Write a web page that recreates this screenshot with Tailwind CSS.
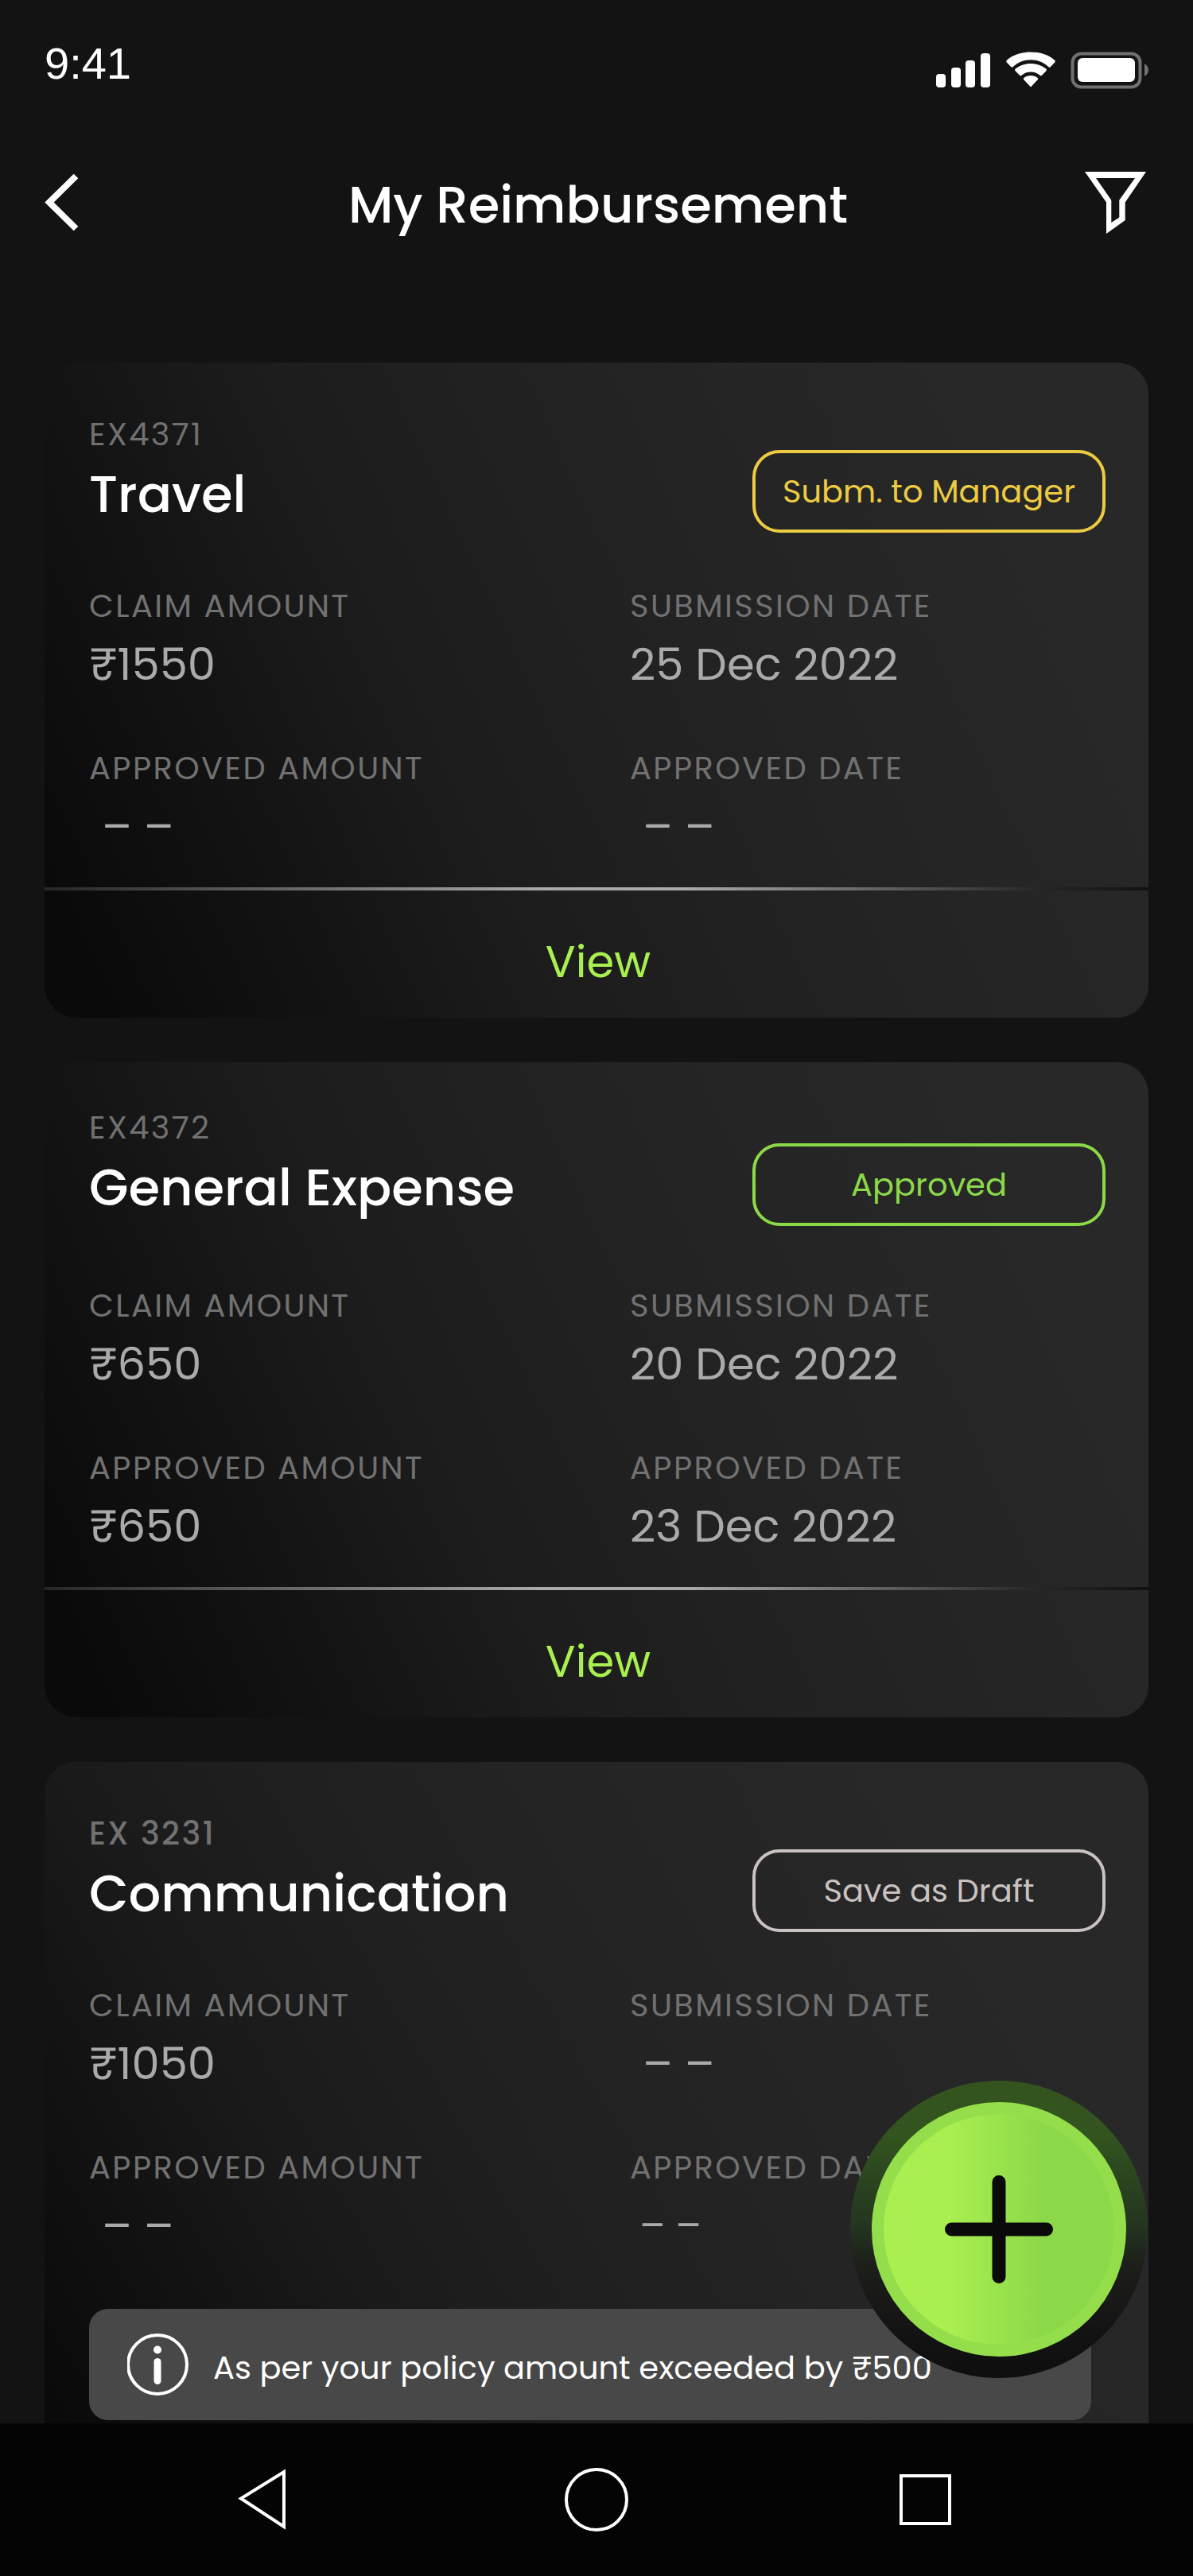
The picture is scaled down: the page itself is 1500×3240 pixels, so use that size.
<!DOCTYPE html>
<html lang="en">
<head>
<meta charset="utf-8">
<meta name="viewport" content="width=device-width, initial-scale=1">
<title>My Reimbursement</title>
<script src="https://cdn.jsdelivr.net/npm/@tailwindcss/browser@4"></script>
</head>
<body class="bg-[#131313] text-white font-['Poppins','Inter',sans-serif]">
<div class="relative flex h-screen flex-col overflow-hidden">

  <!-- Status bar -->
  <div class="flex h-40 shrink-0 items-center justify-between px-14">
    <time class="font-['Liberation_Sans',sans-serif] text-[56px] leading-none">9:41</time>
    <svg class="mt-4 h-12 w-[268px]" viewBox="0 0 268 48" fill="#fff" aria-hidden="true">
      <rect x="1" y="29" width="12" height="17" rx="4"/>
      <rect x="20" y="21" width="12" height="25" rx="4"/>
      <rect x="38" y="12" width="12" height="34" rx="4"/>
      <rect x="57" y="3" width="12" height="43" rx="4"/>
      <path d="M120 11.300c8.500 0 16.300 3.300 22.200 8.700q1.400 1.300 2.700-.1l5.300-5.500q1.300-1.400-.1-2.700C142 4.600 131.500 1.500 120 1.500S98 4.600 89.900 11.700q-1.400 1.300-.1 2.700l5.300 5.500q1.300 1.400 2.700.1c5.900-5.400 13.700-8.700 22.200-8.700z"/>
      <path d="M120 26.500c4.400 0 8.400 1.600 11.500 4.200q1.400 1.200 2.700-.1l5.200-5.400q1.200-1.300-.1-2.600C134.100 18.200 127.400 15.900 120 15.900s-14.100 2.300-19.300 6.700q-1.300 1.300-.1 2.600l5.200 5.400q1.300 1.300 2.700.1c3.100-2.600 7.100-4.200 11.500-4.200z"/>
      <path d="M120 45.500l-8.700-9.200q-1.200-1.400.3-2.500c2.400-1.700 5.300-2.700 8.400-2.700s6 1 8.400 2.700q1.500 1.100.3 2.500z"/>
      <rect x="172.500" y="3.500" width="85" height="42" rx="11" fill="none" stroke="#71716f" stroke-width="4"/>
      <rect x="179" y="9" width="72" height="30" rx="6"/>
      <path d="M263 16c3 1.500 5 4.500 5 8s-2 6.500-5 8z" fill="#71716f"/>
    </svg>
  </div>

  <!-- App bar -->
  <header class="grid h-48 shrink-0 grid-cols-[1fr_auto_1fr] items-center px-14">
    <button type="button" aria-label="Back" class="justify-self-start">
      <svg class="h-19 w-11" viewBox="0 0 44 76" fill="none" stroke="#fff" stroke-width="8"><path d="M39.500 3.500 6 36.500l33.500 33"/></svg>
    </button>
    <h1 class="pt-1 pl-1 text-[64px] leading-20 font-medium">My Reimbursement</h1>
    <button type="button" aria-label="Filter" class="justify-self-end">
      <svg class="h-20 w-20" viewBox="0 0 80 80" fill="#fff" fill-rule="evenodd"><path d="M0 0h77L50.700 38.500V61L27 78V38.500zM14 8l19.300 27.700V64l10-6.500V35.700L63 8z"/></svg>
    </button>
  </header>

  <main class="flex min-h-0 flex-1 flex-col gap-14 overflow-hidden px-14 pt-26">

    <article class="shrink-0 rounded-[40px] bg-[linear-gradient(65deg,#0a0a0a_5%,#131313_21%,#1c1c1c_36%,#212121_52%,#252525_70%,#282828_88%)]">
      <div class="flex items-start justify-between pt-[66px] pr-[54px] pl-14">
        <div>
          <p class="text-[40px] leading-12 tracking-[0.06em] text-[#717171]">EX4371</p>
          <h2 class="mt-2 text-[64px] leading-22 font-medium">Travel</h2>
        </div>
        <span class="mt-11 flex h-26 w-[444px] items-center justify-center rounded-[34px] border-4 border-[#eccb42] text-[40px] text-[#eccb42]">Subm. to Manager</span>
      </div>
      <dl class="mt-17 grid grid-cols-2 gap-x-[82px] gap-y-[70px] pr-[54px] pl-14">
        <div><dt class="text-[40px] leading-12 tracking-[0.06em] text-[#717171]">CLAIM AMOUNT</dt><dd class="mt-3.5 text-[56px] leading-18 text-[#aaa]">₹1550</dd></div>
        <div><dt class="text-[40px] leading-12 tracking-[0.06em] text-[#717171]">SUBMISSION DATE</dt><dd class="mt-3.5 text-[56px] leading-18 text-[#aaa]">25 Dec 2022</dd></div>
        <div><dt class="text-[40px] leading-12 tracking-[0.06em] text-[#717171]">APPROVED AMOUNT</dt><dd class="mt-3.5 pl-4 text-[56px] leading-18 text-[#aaa]">– –</dd></div>
        <div><dt class="text-[40px] leading-12 tracking-[0.06em] text-[#717171]">APPROVED DATE</dt><dd class="mt-3.5 pl-4 text-[56px] leading-18 text-[#aaa]">– –</dd></div>
      </dl>
      <div class="mt-10 h-1 bg-[linear-gradient(90deg,#262626,#aaa_45%,#aaa_58%,#262626_90%,#121212)]"></div>
      <a href="#ex4371" class="flex h-40 items-center justify-center pt-5 pl-1 text-[56px] text-[#a9ef4f]">View</a>
    </article>

    <article class="shrink-0 rounded-[40px] bg-[linear-gradient(65deg,#0a0a0a_5%,#131313_21%,#1c1c1c_36%,#212121_52%,#252525_70%,#282828_88%)]">
      <div class="flex items-start justify-between pt-[58px] pr-[54px] pl-14">
        <div>
          <p class="text-[40px] leading-12 tracking-[0.06em] text-[#717171]">EX4372</p>
          <h2 class="mt-2 text-[64px] leading-22 font-medium">General Expense</h2>
        </div>
        <span class="mt-11 flex h-26 w-[444px] items-center justify-center rounded-[34px] border-4 border-[#8bd848] text-[40px] text-[#8bd848]">Approved</span>
      </div>
      <dl class="mt-19 grid grid-cols-2 gap-x-[82px] gap-y-[70px] pr-[54px] pl-14">
        <div><dt class="text-[40px] leading-12 tracking-[0.06em] text-[#717171]">CLAIM AMOUNT</dt><dd class="mt-3.5 text-[56px] leading-18 text-[#aaa]">₹650</dd></div>
        <div><dt class="text-[40px] leading-12 tracking-[0.06em] text-[#717171]">SUBMISSION DATE</dt><dd class="mt-3.5 text-[56px] leading-18 text-[#aaa]">20 Dec 2022</dd></div>
        <div><dt class="text-[40px] leading-12 tracking-[0.06em] text-[#717171]">APPROVED AMOUNT</dt><dd class="mt-3.5 text-[56px] leading-18 text-[#aaa]">₹650</dd></div>
        <div><dt class="text-[40px] leading-12 tracking-[0.06em] text-[#717171]">APPROVED DATE</dt><dd class="mt-3.5 text-[56px] leading-18 text-[#aaa]">23 Dec 2022</dd></div>
      </dl>
      <div class="mt-10 h-1 bg-[linear-gradient(90deg,#262626,#aaa_45%,#aaa_58%,#262626_90%,#121212)]"></div>
      <a href="#ex4372" class="flex h-40 items-center justify-center pt-5 pl-1 text-[56px] text-[#a9ef4f]">View</a>
    </article>

    <article class="shrink-0 rounded-[40px] bg-[linear-gradient(60deg,#0a0a0a_6%,#131313_20%,#1a1a1a_30%,#202020_45%,#242424_62%,#282828_85%)] pb-40">
      <div class="flex items-start justify-between pt-[66px] pr-[54px] pl-14">
        <div>
          <p class="text-[40px] leading-12 font-medium tracking-[0.06em] text-[#717171]">EX 3231</p>
          <h2 class="mt-2 text-[64px] leading-22 font-medium">Communication</h2>
        </div>
        <span class="mt-11 flex h-26 w-[444px] items-center justify-center rounded-[34px] border-4 border-[#c9c2c1] text-[40px] text-[#c9c2c1]">Save as Draft</span>
      </div>
      <dl class="mt-17 grid grid-cols-2 gap-x-[82px] gap-y-[70px] pr-[54px] pl-14">
        <div><dt class="text-[40px] leading-12 tracking-[0.06em] text-[#717171]">CLAIM AMOUNT</dt><dd class="mt-3.5 text-[56px] leading-18 text-[#aaa]">₹1050</dd></div>
        <div><dt class="text-[40px] leading-12 tracking-[0.06em] text-[#717171]">SUBMISSION DATE</dt><dd class="mt-3.5 pl-4 text-[56px] leading-18 text-[#aaa]">– –</dd></div>
        <div><dt class="text-[40px] leading-12 tracking-[0.06em] text-[#717171]">APPROVED AMOUNT</dt><dd class="mt-3.5 pl-4 text-[56px] leading-18 text-[#aaa]">– –</dd></div>
        <div><dt class="text-[40px] leading-12 tracking-[0.06em] text-[#717171]">APPROVED DATE</dt><dd class="mt-3.5 pl-3 text-[48px] leading-18 text-[#aaa]">– –</dd></div>
      </dl>
      <div class="mt-17 mr-18 ml-14 flex h-35 items-center gap-7 rounded-3xl bg-[#484848] px-12">
        <svg class="size-20 shrink-0" viewBox="0 0 80 80" fill="none" stroke="#fff" aria-hidden="true"><circle cx="38" cy="40" r="37" stroke-width="4"/><path d="M38 36.500v24" stroke-width="9" stroke-linecap="round"/><circle cx="38" cy="21.500" r="5" fill="#fff" stroke="none"/></svg>
        <p class="pt-2 text-[40px] whitespace-nowrap">As per your policy amount exceeded by ₹500</p>
      </div>
    </article>
  </main>

  <!-- Floating action button -->
  <button type="button" aria-label="Add reimbursement" class="absolute right-14 bottom-62 size-94 rounded-full">
    <svg class="size-full" viewBox="0 0 376 376" aria-hidden="true">
      <defs>
        <linearGradient id="halo" x1="0" y1="0" x2="0" y2="1"><stop offset=".18" stop-color="#33541f"/><stop offset=".48" stop-color="#243620"/><stop offset=".62" stop-color="#1d1f1b"/><stop offset=".85" stop-color="#131313"/><stop offset="1" stop-color="#0e0e0e"/></linearGradient>
        <linearGradient id="face" x1="0" y1="0" x2="1" y2="0"><stop offset=".28" stop-color="#a9ef4f"/><stop offset=".7" stop-color="#8bd848"/></linearGradient>
      </defs>
      <circle cx="188" cy="188" r="187" fill="url(#halo)"/>
      <circle cx="188" cy="188" r="160" fill="#93de4a"/>
      <circle cx="188" cy="188" r="145" fill="url(#face)"/>
      <path d="M188 128.500v119M128.500 188h119" stroke="#0a0a0a" stroke-width="17" stroke-linecap="round"/>
    </svg>
  </button>

  <!-- System navigation -->
  <nav class="grid h-48 shrink-0 grid-cols-3 items-center justify-items-center bg-[#040404] px-31">
    <button type="button" aria-label="Back"><svg class="size-20" viewBox="0 0 80 80" fill="none" stroke="#fff" stroke-width="4"><path d="M64 5v69L10 38.500z"/></svg></button>
    <button type="button" aria-label="Home"><svg class="size-20" viewBox="0 0 80 80" fill="none" stroke="#fff" stroke-width="4"><circle cx="40" cy="40" r="38"/></svg></button>
    <button type="button" aria-label="Recent apps"><svg class="size-20" viewBox="0 0 80 80" fill="none" stroke="#fff" stroke-width="4"><path d="M6 10h61v60H6z"/></svg></button>
  </nav>
</div>
</body>
</html>
